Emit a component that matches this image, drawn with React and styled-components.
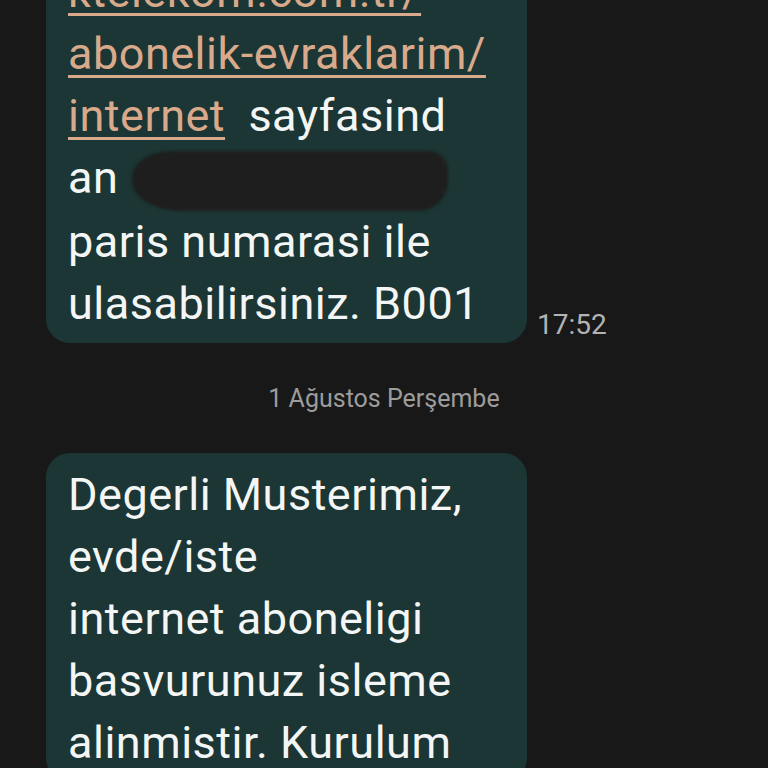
import React from 'react'
import styled, { createGlobalStyle } from 'styled-components'

const GlobalStyle = createGlobalStyle`
    html, body {
        margin: 0;
        padding: 0;
        background: #181818;
        height: 100%;
        overflow: hidden;
    }
    body {
        font-family: Roboto, "Noto Sans", sans-serif;
        -webkit-font-smoothing: antialiased;
    }
`

function App() {
    return (
        <>
            <GlobalStyle />
            <Thread>
                <Row>
                    <Bubble>
                        <Link>ktelekom.com.tr/</Link><br />
                        <Link>abonelik-evraklarim/</Link><br />
                        <Link>internet</Link>&nbsp; sayfasind<br />
                        an <Redacted />i<br />
                        paris numarasi ile<br />
                        ulasabilirsiniz. B001
                    </Bubble>
                    <Time>17:52</Time>
                </Row>

                <DateDivider>1 Ağustos Perşembe</DateDivider>

                <Row>
                    <Bubble $top={11}>
                        Degerli Musterimiz,<br />
                        evde/iste<br />
                        internet aboneligi<br />
                        basvurunuz isleme<br />
                        alinmistir. Kurulum
                    </Bubble>
                </Row>
            </Thread>
        </>
    )
}

export default App

const Thread = styled.div`
    display: flex;
    flex-direction: column;
    margin-top: -50px;
`

const Row = styled.div`
    display: flex;
    align-items: flex-end;
    gap: 10px;
    padding-left: 46px;
`

const Bubble = styled.div`
    box-sizing: border-box;
    width: 481px;
    padding: ${p => p.$top || 11}px 22px 8px;
    background: #1b3634;
    border-radius: 24px;
    color: #f4f6f5;
    font-size: 45px;
    letter-spacing: 0.5px;
    line-height: 62px;
    white-space: nowrap;
`

const Link = styled.span`
    color: #d9a98b;
    text-decoration: underline;
    text-decoration-thickness: 3px;
    text-underline-offset: 6px;
`

const Redacted = styled.span`
    display: inline-block;
    width: 316px;
    height: 60px;
    margin-left: 2px;
    margin-right: -12px;
    vertical-align: middle;
    background: #1e1e1e;
    border-radius: 40px 20px 30px 50px / 26px 20px 30px 30px;
    filter: blur(1.5px);
`

const Time = styled.div`
    color: #b3b3b3;
    font-size: 28px;
    line-height: 30px;
    padding-bottom: 3px;
`

const DateDivider = styled.div`
    text-align: center;
    color: #9c9c9c;
    font-size: 25px;
    line-height: 30px;
    margin: 41px 0 39px;
`
